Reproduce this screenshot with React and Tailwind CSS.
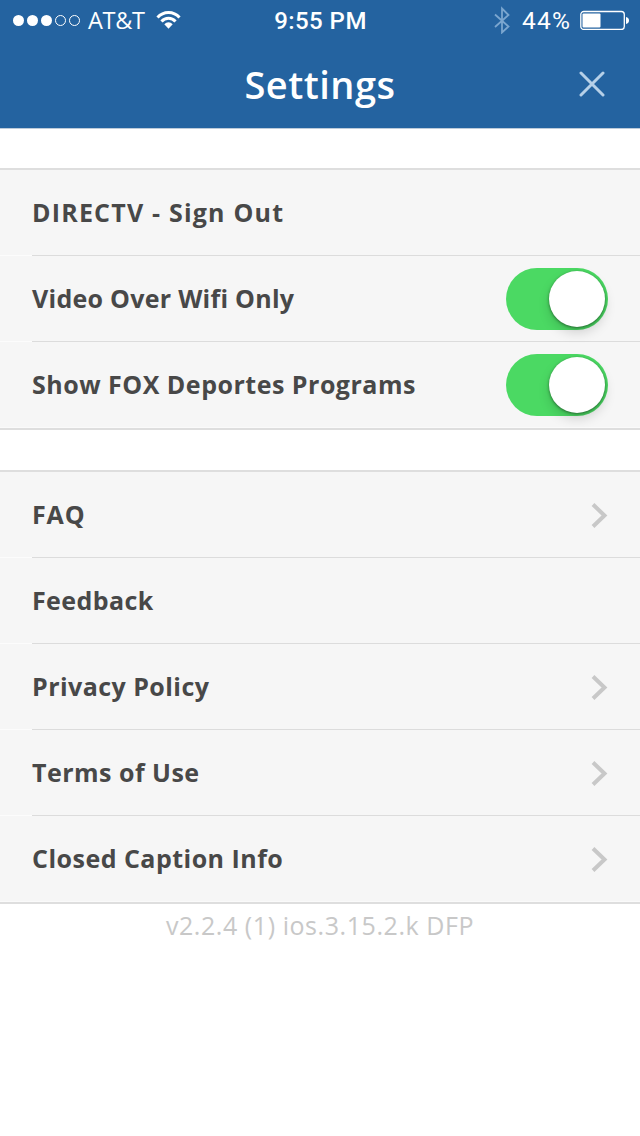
import React from 'react';

const accountRows = [
  { label: 'DIRECTV - Sign Out', tracking: 'tracking-[1.2px]' },
  { label: 'Video Over Wifi Only', tracking: 'tracking-[0.27px]', toggle: true },
  { label: 'Show FOX Deportes Programs', tracking: 'tracking-[0.5px]', toggle: true },
];

const infoRows = [
  { label: 'FAQ', tracking: 'tracking-[0.9px]', link: true },
  { label: 'Feedback', tracking: 'tracking-[0.4px]' },
  { label: 'Privacy Policy', tracking: 'tracking-[0.45px]', link: true },
  { label: 'Terms of Use', tracking: 'tracking-[0.48px]', link: true },
  { label: 'Closed Caption Info', tracking: 'tracking-[0.48px]', link: true },
];

const StatusBar = () => (
  <div className="grid h-10 grid-cols-3 items-center pl-3 pr-[11px] font-['Roboto',sans-serif] text-2xl leading-10">
    <div className="flex h-10 items-center">
      <svg width="70" height="14" viewBox="0 0 70 14" fill="white" stroke="white">
        <circle cx="6.5" cy="7.5" r="5.5" stroke="none" />
        <circle cx="20.5" cy="7.5" r="5.5" stroke="none" />
        <circle cx="34.5" cy="7.5" r="5.5" stroke="none" />
        <circle cx="48.5" cy="7.5" r="5" fill="none" />
        <circle cx="62.5" cy="7.5" r="5" fill="none" />
      </svg>
      <span className="ml-1.5 w-[58px] whitespace-nowrap font-['Open_Sans',sans-serif] text-[23.5px] tracking-[-0.3px]">AT&amp;T</span>
      <svg className="ml-2.5" width="26" height="20" viewBox="0 0 26 20" fill="none" stroke="white" strokeWidth="3">
        <path d="M1.5 7.5C7.5 0.8 17.5 0.8 23.5 7.5" />
        <path d="M5.5 11.5C9.3 7.2 15.7 7.2 19.5 11.5" />
        <path d="M8.3 14.3C10.8 11.6 14.2 11.6 16.7 14.3L12.5 18.7Z" fill="white" stroke="none" />
      </svg>
    </div>
    <div className="h-10 pt-px text-center font-medium tracking-[0.45px]">9:55 PM</div>
    <div className="flex h-10 items-center justify-end">
      <svg width="16" height="28" viewBox="0 0 16 28" fill="none" stroke="#7ba6cf" strokeWidth="1.8">
        <path d="M1 8.5L14.5 20.5L8 26.5V2.5L14.5 9L1 21" />
      </svg>
      <span className="ml-3 w-[51px] whitespace-nowrap pt-0.5 text-[24.5px] tracking-[1.2px]">44%</span>
      <svg className="ml-[7px]" width="49" height="20" viewBox="0 0 49 20">
        <rect x="0.8" y="1.5" width="43.5" height="18" rx="3" fill="none" stroke="white" strokeWidth="1.3" />
        <rect x="2.5" y="3.5" width="18" height="14" rx="1" fill="white" />
        <path d="M46 7C50 7.5 50 13.5 46 14Z" fill="white" />
      </svg>
    </div>
  </div>
);

const Toggle = () => (
  <div className="flex h-[62px] w-[102px] items-center justify-end rounded-full bg-[#4bd963] pr-[3px]">
    <div className="size-14 rounded-full bg-white shadow-[0_1px_3px_rgba(0,0,0,0.45),0_6px_12px_rgba(0,0,0,0.15)]" />
  </div>
);

const Chevron = () => (
  <svg className="mt-px" width="18" height="26" viewBox="0 0 18 26" fill="none" stroke="#c8c8c8" strokeWidth="4">
    <path d="M3 2.5L14.5 13.5L3 24.5" />
  </svg>
);

const Row = ({ label, tracking, toggle, link, last }) => (
  <div className="h-[86px] bg-[#f6f6f6]">
    <div className="flex h-[85px] items-center justify-between px-8">
      <span className={`whitespace-nowrap text-[25px] font-bold text-[#484848] ${tracking}`}>{label}</span>
      {toggle && <Toggle />}
      {link && <Chevron />}
    </div>
    {last ? <div className="h-px bg-[#fafafa]" /> : (
      <div className="h-px bg-[#fcfcfc] pl-8"><div className="h-px bg-[#dcdcdc]" /></div>
    )}
  </div>
);

const Section = ({ rows }) => (
  <section className="border-y-2 border-[#dedede]">
    {rows.map((row, i) => (
      <Row key={row.label} {...row} last={i === rows.length - 1} />
    ))}
  </section>
);

const App = () => {
  return (
    <div className="min-h-[1136px] w-[640px] bg-white font-['Open_Sans',sans-serif]">
      <header className="h-[129px] border-b border-[#bccbda] bg-[#2463a0] text-white">
        <StatusBar />
        <div className="grid h-[88px] grid-cols-[1fr_auto_1fr] items-center px-[35px]">
          <h1 className="col-start-2 text-[38px] font-semibold tracking-[0.5px]">Settings</h1>
          <svg className="justify-self-end" width="26" height="26" viewBox="0 0 26 26" fill="none" stroke="#b6d0e8" strokeWidth="3" strokeLinecap="round">
            <path d="M2 2L24 24M24 2L2 24" />
          </svg>
        </div>
      </header>
      <main className="flex flex-col gap-10 pt-[39px]">
        <Section rows={accountRows} />
        <Section rows={infoRows} />
      </main>
      <p className="pt-[3px] text-center text-[25px] tracking-[0.56px] text-[#c8c8c8]">v2.2.4 (1) ios.3.15.2.k DFP</p>
    </div>
  );
};

export default App;
